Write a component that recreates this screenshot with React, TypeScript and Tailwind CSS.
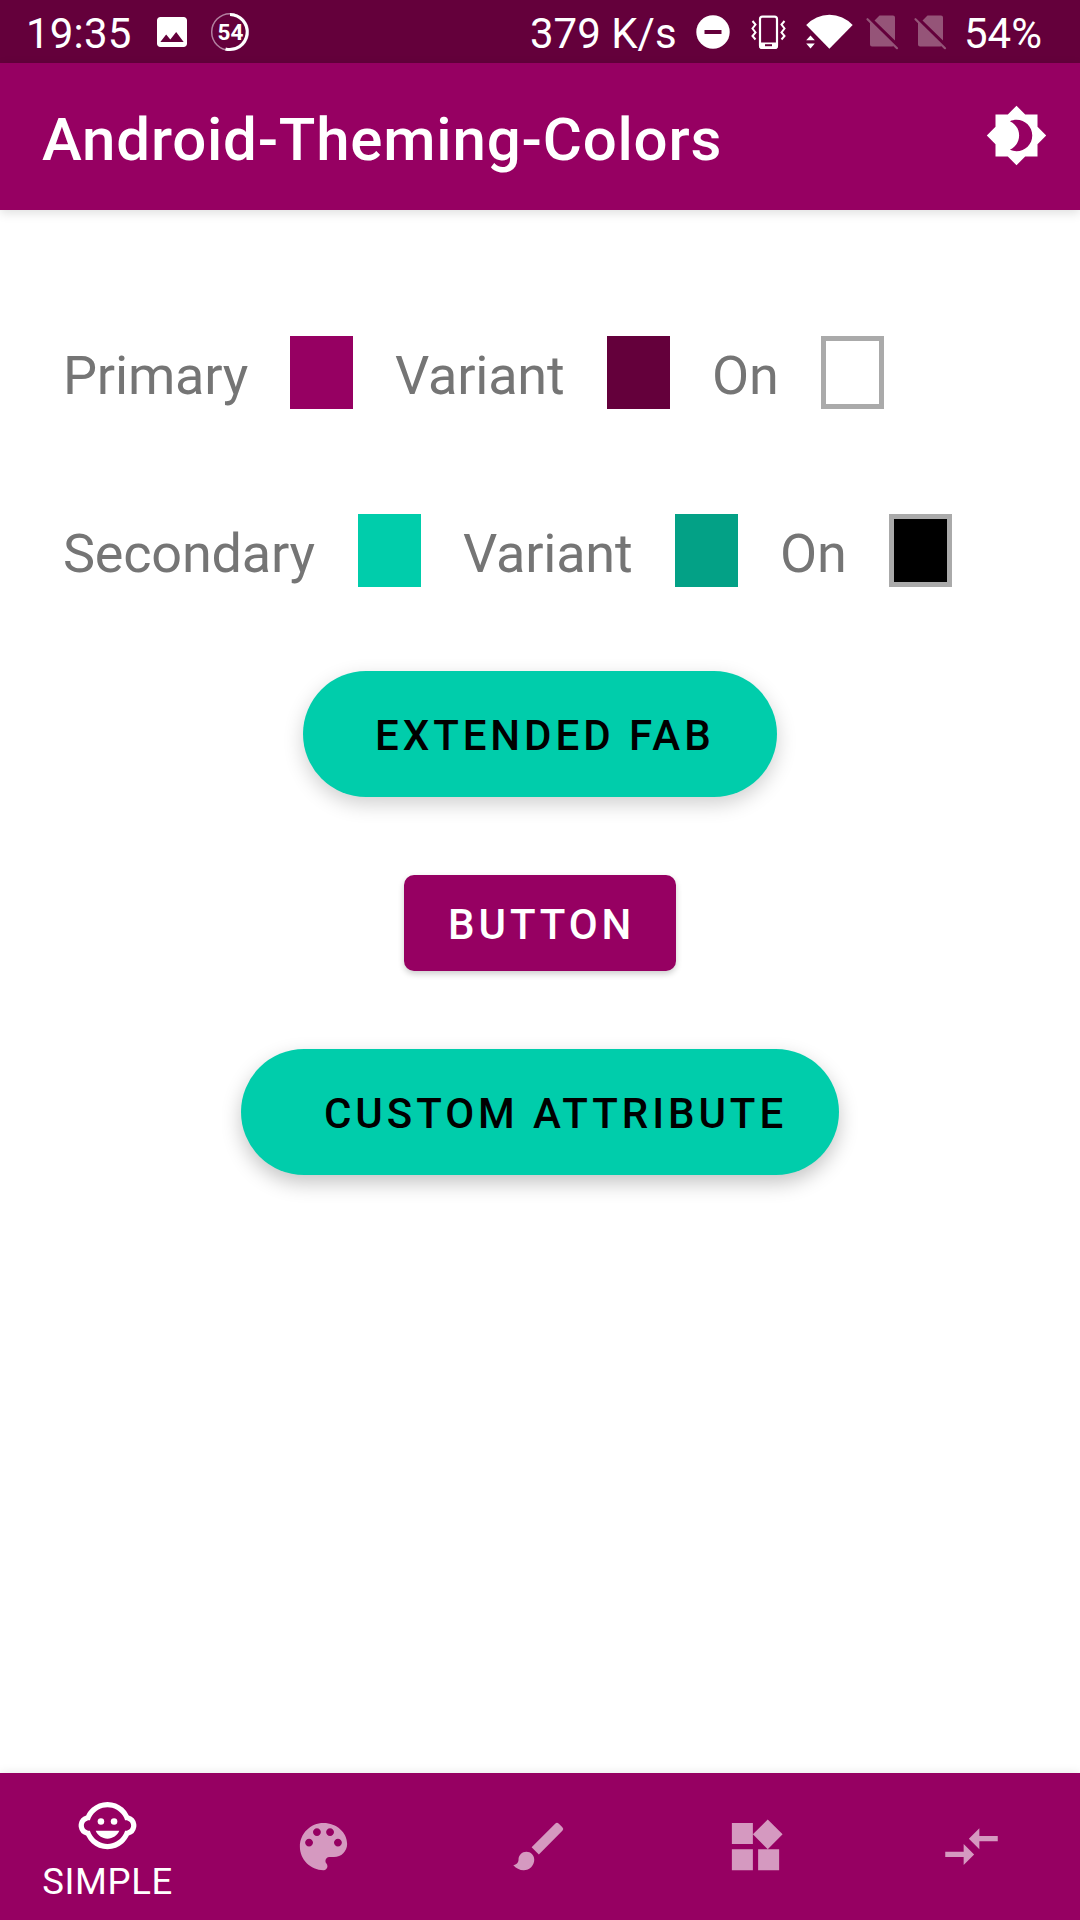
import { MdBrightness4, MdBrush, MdChildCare, MdCompareArrows, MdImage, MdWidgets } from "react-icons/md";

function BatteryRing() {
  return (
    <svg className="ml-[17px] size-[42px]" viewBox="0 0 42 42" fill="none">
      <circle cx="21" cy="21" r="18.3" stroke="#b280a0" strokeWidth="1.5" />
      <path d="M21 3.500A17.500 17.500 0 1 1 16.500 38" stroke="white" strokeWidth="3" />
      <text x="21.5" y="29.2" textAnchor="middle" fill="white" fontFamily="Roboto, sans-serif" fontWeight="700" fontSize="22.5">54</text>
    </svg>
  );
}

function DoNotDisturb() {
  return (
    <svg className="h-[42px] w-[34px]" viewBox="0 0 34 42">
      <circle cx="17" cy="21" r="16.700" fill="white" />
      <path d="M8.500 21h17" stroke="#64003b" strokeWidth="4" />
    </svg>
  );
}

function Vibrate() {
  return (
    <svg className="ml-[20px] h-[42px] w-[36px]" viewBox="0 0 36 42" fill="none" stroke="white">
      <rect x="10" y="5.600" width="17" height="31.400" rx="2.500" strokeWidth="2.2" />
      <path d="M10 32.300h17v3q0 2-2 2H12q-2 0-2-2z" fill="white" strokeWidth="1.5" />
      <path d="M15 34.200h7" stroke="#64003b" strokeWidth="2" />
      <path d="M2.500 10l3 3.500-3 4 3 4-3 3.500 3 3.500M34.500 10l-3 3.500 3 4-3 4 3 3.500-3 3.500" strokeWidth="2" />
    </svg>
  );
}

function Wifi() {
  return (
    <svg className="ml-[20px] h-[42px] w-[48px]" viewBox="0 0 48 42" fill="white">
      <path d="M.200 14A31.500 31.500 0 0 1 46.700 14L23.400 37.800Z" />
      <path d="M4.500 24.600l4.300 4.600H.200z M4.500 37.600l4.300-5H.200z" />
    </svg>
  );
}

function NoSim() {
  return (
    <svg className="h-[42px] w-[34px]" viewBox="0 0 34 42" fill="#955478">
      <path d="M14.500 4.500H28q2 0 2 2V29.500L9.500 9.500z M5 11l24 23q-.500 1.500-2 1.500H7q-2 0-2-2z" />
      <path d="M2.500 8.200l29.500 29" stroke="#955478" strokeWidth="2.2" strokeLinecap="round" />
    </svg>
  );
}

function Palette({ className }: { className?: string }) {
  return (
    <svg className={className} viewBox="0 0 24 24" fill="currentColor">
      <path d="M12 3c-4.97 0-9 4.03-9 9s4.03 9 9 9c.83 0 1.5-.67 1.5-1.5 0-.39-.15-.74-.39-1.01-.23-.26-.38-.61-.38-.99 0-.83.67-1.5 1.5-1.5H16c2.76 0 5-2.24 5-5 0-4.42-4.03-8-9-8zm-5.5 9c-.83 0-1.5-.67-1.5-1.5S5.67 9 6.5 9 8 9.67 8 10.5 7.33 12 6.5 12zm3-4C8.67 8 8 7.33 8 6.5S8.67 5 9.5 5s1.5.67 1.5 1.5S10.33 8 9.5 8zm5 0c-.83 0-1.5-.67-1.5-1.5S13.67 5 14.5 5s1.5.67 1.5 1.5S15.33 8 14.5 8zm3 4c-.83 0-1.5-.67-1.5-1.5S16.67 9 17.5 9s1.5.67 1.5 1.5-.67 1.5-1.5 1.5z" />
    </svg>
  );
}

const tabs = [Palette, MdBrush, MdWidgets, MdCompareArrows];

function Swatch({ color }: { color: string }) {
  return <div className={`h-[73px] w-[63px] ${color}`} />;
}

function Label({ text, width }: { text: string; width: string }) {
  return <span className={`h-[73px] leading-[79px] whitespace-nowrap ${width}`}>{text}</span>;
}

export default function App() {
  return (
    <div className="flex h-[1920px] w-[1080px] flex-col overflow-hidden bg-white font-['Roboto',sans-serif]">
      <div className="flex h-[63px] items-start bg-[#64003b] text-[42px] leading-[67px] text-white">
        <span className="ml-[26px] w-[126px] tracking-[0.2px]">19:35</span>
        <div className="flex h-[63px] items-center">
          <MdImage className="size-[40px]" />
          <BatteryRing />
        </div>
        <span className="ml-auto w-[166px] whitespace-nowrap">379 K/s</span>
        <div className="flex h-[63px] items-center">
          <DoNotDisturb />
          <Vibrate />
          <Wifi />
          <div className="ml-[11px] flex gap-[14px]">
            <NoSim />
            <NoSim />
          </div>
        </div>
        <span className="ml-[17px] w-[116px]">54%</span>
      </div>

      <header className="z-10 flex h-[147px] items-start justify-between bg-[#960062] pr-[32px] pl-[42px] text-white shadow-[0_3px_10px_rgba(0,0,0,0.13)]">
        <h1 className="text-[60px] leading-[153px] font-medium tracking-[0.8px] whitespace-nowrap">Android-Theming-Colors</h1>
        <MdBrightness4 className="mt-[41px] size-[63px]" />
      </header>

      <main className="flex flex-1 flex-col">
        <div className="mt-[126px] ml-[63px] flex gap-[42px] text-[54px] tracking-[-0.2px] text-[#757575]">
          <Label text="Primary" width="w-[185px]" />
          <Swatch color="bg-[#960062]" />
          <Label text="Variant" width="w-[170px]" />
          <Swatch color="bg-[#64003b]" />
          <Label text="On" width="w-[67px]" />
          <Swatch color="border-[5px] border-[#aaaaaa] bg-white" />
        </div>
        <div className="mt-[105px] ml-[63px] flex gap-[42px] text-[54px] tracking-[-0.2px] text-[#757575]">
          <Label text="Secondary" width="w-[253px]" />
          <Swatch color="bg-[#00cdab]" />
          <Label text="Variant" width="w-[170px]" />
          <Swatch color="bg-[#03a186]" />
          <Label text="On" width="w-[67px]" />
          <Swatch color="border-[5px] border-[#aaaaaa] bg-black" />
        </div>

        <div className="mt-[84px] flex flex-col items-center text-[42px] font-medium tracking-[3.95px] whitespace-nowrap">
          <button className="h-[126px] w-[474px] rounded-full bg-[#00cdab] pl-[72px] text-left leading-[129px] text-black shadow-[0_7px_20px_rgba(0,0,0,0.19)]">EXTENDED FAB</button>
          <button className="mt-[78px] h-[96px] w-[272px] rounded-[10px] bg-[#960062] pl-[44px] text-left leading-[99px] text-white shadow-[0_3px_6px_rgba(0,0,0,0.2)]">BUTTON</button>
          <button className="mt-[78px] h-[126px] w-[598px] rounded-full bg-[#00cdab] pl-[83px] text-left leading-[129px] text-black shadow-[0_8px_20px_rgba(0,0,0,0.23)]">CUSTOM ATTRIBUTE</button>
        </div>
      </main>

      <nav className="grid h-[147px] grid-cols-5 bg-[#960062] shadow-[0_0_10px_rgba(0,0,0,0.1)]">
        <div className="flex flex-col items-center pt-[21px] pr-px text-white">
          <MdChildCare className="size-[63px]" />
          <span className="text-[36.5px] leading-[50px] tracking-[0.6px]">SIMPLE</span>
        </div>
        {tabs.map((Icon, i) => (
          <div key={i} className="flex items-center justify-center pr-[2px] text-[#d599c0]">
            <Icon className="size-[63px]" />
          </div>
        ))}
      </nav>
    </div>
  );
}
